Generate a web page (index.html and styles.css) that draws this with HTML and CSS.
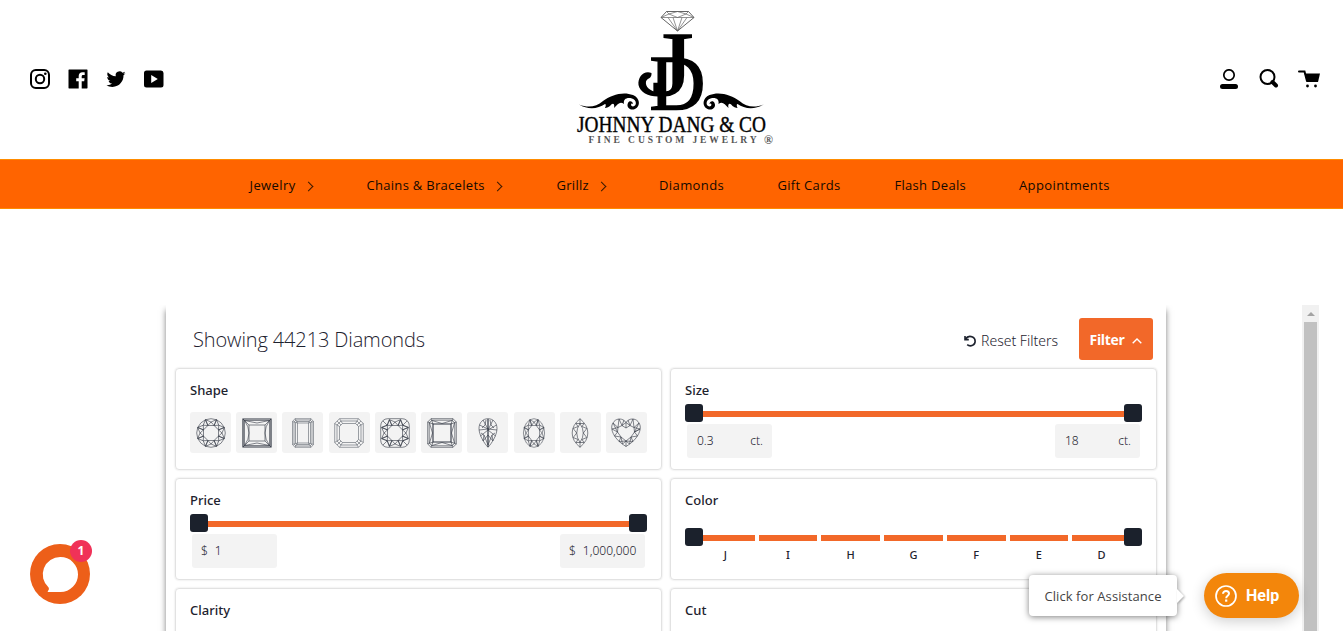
FILE: index.html
```html
<!DOCTYPE html>
<html lang="en">
<head>
<meta charset="utf-8">
<title>Johnny Dang &amp; Co</title>
<link rel="stylesheet" href="styles.css">
</head>
<body>
<svg class="defs" width="0" height="0" aria-hidden="true">
  <defs>
    <g id="facet"><path d="M-3.100-7.500H3.100L0-11zM-5.500-13.300 0-11 5.500-13.300M3.100-7.500 5.500-13.300M-3.100-7.500-5.500-13.300"/></g>
    <g id="facets">
      <use href="#facet"/><use href="#facet" transform="rotate(45)"/><use href="#facet" transform="rotate(90)"/><use href="#facet" transform="rotate(135)"/>
      <use href="#facet" transform="rotate(180)"/><use href="#facet" transform="rotate(225)"/><use href="#facet" transform="rotate(270)"/><use href="#facet" transform="rotate(315)"/>
    </g>
    <g id="flourish">
      <path d="M9 104.500C18 108 26 107 33 101C41 95 53 91 63 95C70 98 71 106 65 109C60 111 56 107 58 103C59 100 63 101 63 104C61 102 60 106 63 106.500C67 106 67 100 62 98.500C57 97 53 99 54 104C50 101 48 104 44 108C45 104 43 102 40 106C37 108 35 108 35 108C36 106 36 104 35 104C28 109 18 110 9 104.500Z"/>
    </g>
  </defs>
</svg>

<header class="header">
  <div class="social">
    <svg width="20" height="20" viewBox="0 0 20 20"><rect x="1" y="1" width="18" height="18" rx="4.800" fill="none" stroke="#000" stroke-width="2"/><circle cx="10" cy="10" r="4.200" fill="none" stroke="#000" stroke-width="2"/><circle cx="15.300" cy="4.700" r="1.300"/></svg>
    <svg width="20" height="20" viewBox="0 0 20 20"><path d="M1 .5H19A.6.6 0 0 1 19.500 1V19A.6.6 0 0 1 19 19.500H13.700V12.200H16.200L16.600 9.300H13.700V7.500C13.700 6.600 14 6 15.200 6H16.700V3.400C16.400 3.400 15.500 3.300 14.400 3.300 12.200 3.300 10.700 4.600 10.700 7.100V9.300H8.200V12.200H10.700V19.500H1A.6.6 0 0 1 .5 19V1A.6.6 0 0 1 1 .5Z"/></svg>
    <svg width="20" height="20" viewBox="0 0 20 20"><path d="M19.500 4.300C18.800 4.600 18.100 4.800 17.300 4.900 18.100 4.400 18.700 3.700 19 2.800 18.200 3.200 17.400 3.600 16.500 3.700A3.900 3.900 0 0 0 9.800 7.300C6.600 7.100 3.700 5.600 1.800 3.200.8 4.900 1.300 7.200 3 8.400 2.400 8.400 1.800 8.200 1.200 7.900 1.200 9.800 2.500 11.400 4.300 11.800 3.800 12 3.200 12 2.600 11.900 3.100 13.400 4.500 14.600 6.200 14.600A7.800 7.800 0 0 1 .5 16.200C2.200 17.300 4.200 17.900 6.400 17.900 13.600 17.900 17.800 11.800 17.500 6.300 18.300 5.700 19 5.100 19.500 4.300Z"/></svg>
    <svg width="20" height="20" viewBox="0 0 20 20"><path fill-rule="evenodd" d="M2.500 1.500H17A2.600 2.600 0 0 1 19.500 4V16A2.500 2.500 0 0 1 17 18.500H2.500A2.500 2.500 0 0 1 0 16V4A2.500 2.500 0 0 1 2.500 1.500ZM7.200 6V14L13.800 10Z"/></svg>
  </div>

  <svg class="logo" width="210" height="155" viewBox="0 0 210 155">
    <g fill="none" stroke="#666" stroke-width=".7"><path stroke="#222" d="M96.500 11.500H118.500L124 17.500 107.500 31 91 17.500Z"/><path d="M91 17.500H124M91 17.500 99 14 107.500 17.500 116 14 124 17.500M96.500 11.500 99 14 107.500 11.500 116 14 118.500 11.500M98 17.500 107.500 31 117 17.500M103 17.500 107.500 31 112 17.500"/></g>
    <g class="logo-serif">
      <text class="logo-mark" transform="translate(79.500 109) scale(.99 1)" font-size="78">D</text>
      <text class="logo-mark" transform="translate(82 94.500) scale(1.180 1)" font-size="90">J</text>
      <path d="M81.500 73C74 70 67.500 77 68.500 85C70 92 78 96.500 88 96.500V92.500C80 91 75 87 76 81.500C77 78 82 79 81.500 73Z"/>
      <text x="7" y="132" font-size="24" stroke="#111" stroke-width=".45" textLength="189" lengthAdjust="spacingAndGlyphs">JOHNNY DANG &amp; CO</text>
      <text class="logo-tag" x="18.500" y="143" font-size="9.500" textLength="168">FINE CUSTOM JEWELRY</text>
      <text class="logo-tag" x="194" y="144" font-size="12">®</text>
    </g>
    <use href="#flourish"/><use href="#flourish" transform="matrix(-1 0 0 1 202.500 0)"/>
  </svg>

  <div class="tools">
    <svg width="20" height="20" viewBox="0 0 20 20"><circle cx="10" cy="6" r="5.200" fill="none" stroke="#000" stroke-width="1.700"/><rect x="1" y="15" width="18" height="5" rx="2.500"/></svg>
    <svg width="20" height="20" viewBox="0 0 20 20"><circle cx="8.500" cy="8" r="7" fill="none" stroke="#000" stroke-width="2"/><path d="M13.500 13 17 16.500" stroke="#000" stroke-width="4" stroke-linecap="round"/></svg>
    <svg class="cart" width="24" height="20" viewBox="0 0 24 20"><path d="M1 2.500H6.500L9 12" fill="none" stroke="#000" stroke-width="2" stroke-linecap="round"/><path d="M6.500 4.500H22L20 13H9Z"/><circle cx="9.500" cy="17" r="1.400"/><circle cx="17.500" cy="17" r="1.400"/></svg>
  </div>
</header>

<nav class="nav">
  <a>Jewelry<i class="chev"></i></a>
  <a class="tight">Chains &amp; Bracelets<i class="chev"></i></a>
  <a class="tight">Grillz<i class="chev"></i></a>
  <a>Diamonds</a>
  <a class="tight">Gift Cards</a>
  <a class="tight">Flash Deals</a>
  <a>Appointments</a>
</nav>

<main class="frame">
  <section class="panel">
    <div class="panel-head">
      <h1>Showing 44213 Diamonds</h1>
      <div class="reset"><svg width="12" height="12" viewBox="0 0 12 12" fill="none" stroke="#1d222e" stroke-width="1.600"><path d="M1 1V4.600H4.800M1.300 4.300C3 1.700 6 .9 8.500 2 12 3.600 12 8.700 8.600 10.300 6.500 11.200 4.600 10.800 3.200 9.600"/></svg><span>Reset Filters</span></div>
      <button class="filter"><span>Filter</span><svg width="10" height="6" viewBox="0 0 10 6"><path d="M.7 5.300 5 1 9.300 5.300" fill="none" stroke="#fff" stroke-width="1.400"/></svg></button>
    </div>
    <div class="cards">
      <div class="card">
        <h2>Shape</h2>
        <div class="shapes">
          <span><svg viewBox="-15 -15 30 30"><circle r="14.300"/><use href="#facets"/></svg></span>
          <span><svg viewBox="-15 -15 30 30"><path stroke-width="1.200" d="M-14-14H14V14H-14Z"/><path d="M-12.500-12.500H12.500V12.500H-12.500ZM-14-14-8-8H8L14-14M-14 14-8 8H8L14 14M-8-8V8M8-8V8M-12.500-12.500Q-3.500 0-12.500 12.500M12.500-12.500Q3.500 0 12.500 12.500M-12.500-12.500 0-10 12.500-12.500M-12.500 12.500 0 10 12.500 12.500"/></svg></span>
          <span><svg class="soft" viewBox="-15 -15 30 30"><path d="M-8-14.300H8L10.500-11.500V11.500L8 14.300H-8L-10.500 11.500V-11.500ZM-7-13H7L9-11V11L7 13H-7L-9 11V-11ZM-6-11.500H6L7.500-10V10L6 11.500H-6L-7.500 10V-10ZM-5.500-10H5.500V10H-5.500ZM-8-14.300-5.500-10-10.500-11.500M8-14.300 5.500-10 10.500-11.500M-8 14.300-5.500 10-10.500 11.500M8 14.300 5.500 10 10.500 11.500"/></svg></span>
          <span><svg class="soft" viewBox="-15 -15 30 30"><path d="M-9.500-14.300H9.500L14.300-9.500V9.500L9.500 14.300H-9.500L-14.300 9.500V-9.500ZM-8-12H8L12-8V8L8 12H-8L-12 8V-8ZM-6.500-9.500H6.500L9.500-6.500V6.500L6.500 9.500H-6.500L-9.500 6.500V-6.500ZM-9.500-14.300-6.500-9.500M9.500-14.300 6.500-9.500M-9.500 14.300-6.500 9.500M9.500 14.300 6.500 9.500M-14.300-9.500-9.500-6.500M14.300-9.500 9.500-6.500M-14.300 9.500-9.500 6.500M14.300 9.500 9.500 6.500M-12-12-8-8M12-12 8-8M-12 12-8 8M12 12 8 8"/></svg></span>
          <span><svg viewBox="-15 -15 30 30"><rect x="-14.300" y="-14.300" width="28.600" height="28.600" rx="7"/><use href="#facets"/><path d="M-5.600-13.400-7.800-7.800-13.400-5.600M5.600-13.400 7.800-7.800 13.400-5.600M-5.600 13.400-7.800 7.800-13.400 5.600M5.600 13.400 7.800 7.800 13.400 5.600M-12.200-12.200-7.800-7.800M12.200-12.200 7.800-7.800M-12.200 12.200-7.800 7.800M12.200 12.200 7.800 7.800"/></svg></span>
          <span><svg viewBox="-15 -15 30 30"><path d="M-11-14.300H11L14.300-11V11L11 14.300H-11L-14.300 11V-11ZM-10-12.800H10L12.800-10V10L10 12.800H-10L-12.800 10V-10ZM-14.300-11-9-9-11-14.300M14.300-11 9-9 11-14.300M-14.300 11-9 9-11 14.300M14.300 11 9 9 11 14.300M-10-12.500 0-9.500 10-12.500M-10 12.500 0 9.500 10 12.500M-12.500-10-9.500 0-12.500 10M12.500-10 9.500 0 12.500 10"/><path stroke-width="1.100" d="M-9-9H9V9H-9Z"/></svg></span>
          <span><svg viewBox="-15 -15 30 30"><path d="M0-14.300C5-14.300 9-10.500 9-4.500 9 2 4 10 0 14.300-4 10-9 2-9-4.500-9-10.500-5-14.300 0-14.300ZM0-4-5-13M0-4-8.500-8M0-4-9-3M0-3-7.500 3M0-3 5-13M0-3 8.500-8M0-4 9-3M0-3 7.500 3M0 2-5 8M0 2 5 8M-6-5-3-8-2-13M6-5 3-8 2-13M-7 0-4 2-5 8M7 0 4 2 5 8M-4 2 0 12 4 2"/><path stroke-width="1.200" d="M0-14V14"/></svg></span>
          <span><svg viewBox="-15 -15 30 30"><g transform="scale(.74 1)"><circle r="14.300"/><use href="#facets"/></g></svg></span>
          <span><svg viewBox="-15 -15 30 30"><path d="M0-14.300Q8-7.500 7.800 0 8 7.500 0 14.300-8 7.500-7.800 0-8-7.500 0-14.300ZM0-9.500Q6.500 0 0 9.500-6.500 0 0-9.500M0-14.300V-9.500M0 14.300V9.500M0-9.500-4-9.500-2-6.500-6.800-4.500-3.300 0-6.800 4.500-2 6.500-4 9.500 0 9.500M0-9.500 4-9.500 2-6.500 6.800-4.500 3.300 0 6.800 4.500 2 6.500 4 9.500 0 9.500"/></svg></span>
          <span><svg viewBox="-15 -15 30 30"><path d="M0-10.500C3-15 9-15 12-11.500 16-7 14.500-1 10 5 7 9 3 11.500 0 13.500-3 11.500-7 9-10 5-14.500-1-16-7-12-11.500-9-15-3-15 0-10.500ZM0-5 4-7.500 8-5.500 8.500-1 5 4 0 8-5 4-8.500-1-8-5.500-4-7.500ZM0-10.500V-5M0-10.500 4-7.500 7-14 8-5.500 13-10 8.500-1 14-4 8.500-1 11.500 3 5 4 7 8.500 0 8V13.500M0-10.500-4-7.500-7-14-8-5.500-13-10-8.500-1-14-4M-8.500-1-11.500 3-5 4-7 8.500 0 8M5 4 3.500 11 0 8-3.500 11-5 4M4-7.500 2-13M-4-7.500-2-13M8-5.500 14-4M-8-5.500-14-4"/></svg></span>
        </div>
      </div>
      <div class="card">
        <h2>Size</h2>
        <div class="slider"><b></b><div class="track"></div><b></b></div>
        <div class="fields"><div class="field"><span>0.3</span><span>ct.</span></div><div class="field"><span>18</span><span>ct.</span></div></div>
      </div>
      <div class="card">
        <h2>Price</h2>
        <div class="slider"><b></b><div class="track"></div><b></b></div>
        <div class="fields"><div class="field money"><span>$</span><span>1</span></div><div class="field money"><span>$</span><span>1,000,000</span></div></div>
      </div>
      <div class="card">
        <h2>Color</h2>
        <div class="slider stepped"><b></b><div class="track"><i></i><i></i><i></i><i></i><i></i><i></i><i></i></div><b></b></div>
        <div class="grades"><span>J</span><span>I</span><span>H</span><span>G</span><span>F</span><span>E</span><span>D</span></div>
      </div>
      <div class="card"><h2>Clarity</h2></div>
      <div class="card"><h2>Cut</h2></div>
    </div>
  </section>
  <div class="scrollbar"><div class="arrow"></div><div class="thumb"></div></div>
</main>

<div class="chat">
  <svg width="60" height="60" viewBox="0 0 60 60"><circle cx="30" cy="30" r="30" fill="#ed5f19"/><path fill="#fff" d="M30.500 13A17.500 17.500 0 0 1 30.500 48H18.300C17.800 48 17.500 47.600 17.800 47.200 18.800 46 19.300 45 18.600 43.600A17.500 17.500 0 0 1 30.500 13Z"/></svg>
  <span class="badge">1</span>
</div>
<div class="tip">Click for Assistance</div>
<div class="help"><svg width="22" height="22" viewBox="0 0 22 22"><circle cx="11" cy="11" r="10" fill="none" stroke="#fff" stroke-width="1.700"/><path d="M8 8.700C8 5.200 14 5.300 14 8.600 14 10.800 11.200 10.800 11.200 13.200" fill="none" stroke="#fff" stroke-width="2"/><rect x="10.100" y="14.500" width="2.200" height="2.200" fill="#fff"/></svg><span>Help</span></div>
</body>
</html>
```
FILE: styles.css
```css
* { box-sizing: border-box; }
body { margin: 0; width: 1343px; height: 631px; overflow: hidden; background: #fff; color: #1d222e; font-family: "Open Sans", "Noto Sans", sans-serif; }
h1, h2 { margin: 0; }
.defs { display: block; }

.header { height: 159px; display: grid; grid-template-columns: 570px 210px 1fr; }
.social { display: flex; gap: 18px; padding: 69px 0 0 30px; }
.logo { display: block; overflow: visible; }
.logo-serif { font-family: "Liberation Serif", serif; fill: #000; }
.logo-mark { stroke: #000; stroke-width: 1.500px; }
.logo-tag { font-weight: 700; fill: #555; }
.tools { display: flex; justify-content: flex-end; gap: 20px; padding: 69px 21px 0 0; }
.cart { margin-left: -1px; }

.nav { height: 50px; background: #ff6400; border: solid #ff8c00; border-width: 1px 0; display: grid; grid-template-columns: 117px 190px 102.500px 118.500px 117px 124.500px auto; padding-left: 249.500px; font-size: 13px; line-height: 50px; letter-spacing: .4px; color: #130900; white-space: nowrap; }
.nav .tight { letter-spacing: .3px; }
.chev { display: inline-block; width: 7px; height: 7px; margin-left: 9px; border: solid #3a1a00; border-width: 1px 1px 0 0; transform: rotate(45deg); }

.frame { margin-top: 96px; height: 326px; width: 1319px; overflow: hidden; display: flex; justify-content: space-between; }
.panel { margin-left: 166px; width: 1000px; height: 500px; padding: 13px 9px 0; background: #fff; box-shadow: 0 5px 6px rgba(0,0,0,.5); font-family: "Noto Sans", "Open Sans", sans-serif; }
.panel-head { height: 42px; display: flex; align-items: center; padding: 0 4px 0 18px; }
h1 { font-family: "Open Sans", sans-serif; font-weight: 300; font-size: 20px; margin-right: auto; letter-spacing: -.13px; }
.reset { display: flex; align-items: center; gap: 5px; font-size: 14px; margin-right: 21px; padding-top: 3px; font-weight: 300; }
.filter { width: 74px; height: 42px; border: 0; border-radius: 3px; padding: 0; background: #f26829; color: #fff; font: 700 14px "Open Sans", sans-serif; letter-spacing: -.35px; display: flex; align-items: center; justify-content: center; gap: 8px; }
.filter svg { margin-top: 3px; }
.cards { display: grid; grid-template-columns: 487px 487px; grid-auto-rows: 102px; gap: 8px; margin-top: 8px; }
.card { border: 1px solid #e2e2e2; border-radius: 4px; box-shadow: 0 0 2px rgba(0,0,0,.15); padding: 11px 14px 0; }
.card h2 { font-size: 13px; line-height: 20px; font-weight: 500; }
.shapes { display: flex; justify-content: space-between; margin-top: 12px; }
.shapes span { width: 41px; height: 41px; border-radius: 3px; background: #f3f3f3; display: grid; place-items: center; }
.shapes svg { width: 30px; height: 30px; fill: none; stroke: #303642; stroke-width: .6; }
.shapes svg.soft { stroke: #5d636c; }
.slider { height: 18px; margin-top: 4px; display: flex; align-items: center; }
.slider b { width: 18px; height: 18px; border-radius: 3px; background: #1b212c; }
.track { flex: 1; height: 6px; margin-top: 2px; background: #f26829; }
.fields { display: flex; justify-content: space-between; padding: 2px 2px 0; }
.field { width: 85px; height: 34px; border-radius: 3px; background: #f3f3f3; display: flex; justify-content: space-between; padding: 0 9px 0 10px; font-size: 12px; line-height: 33px; font-weight: 300; }
.money { justify-content: flex-start; gap: 7px; padding-left: 9px; }
.stepped { margin-top: 18px; }
.stepped .track { background: none; display: grid; grid-template-columns: 52px 58px 59px 59px 59px 58px 1fr; column-gap: 4px; }
.stepped i { background: #f26829; }
.grades { display: grid; grid-template-columns: repeat(7, 62.700px); margin: 1px 0 0 9px; font-size: 11px; line-height: 16px; text-align: center; font-weight: 500; }
.scrollbar { width: 17px; background: #f1f1f1; }
.arrow { height: 17px; display: grid; place-items: center; }
.arrow::before { content: ""; border: solid transparent; border-width: 0 4px 4px; border-bottom-color: #a3a3a3; }
.thumb { height: 320px; margin: 0 2px; background: #c1c1c1; }

.chat { position: absolute; left: 30px; top: 544px; width: 60px; height: 60px; }
.badge { position: absolute; left: 40px; top: -4px; width: 22px; height: 22px; border-radius: 50%; background: #f03258; color: #fff; font: 700 12px/22px "Open Sans", sans-serif; text-align: center; }
.tip { position: absolute; left: 1029px; top: 575px; width: 148px; height: 41px; border-radius: 4px; background: #fff; box-shadow: 0 1px 6px rgba(0,0,0,.5); text-align: center; font-size: 13px; line-height: 42px; letter-spacing: .08px; color: #444; white-space: nowrap; }
.tip::after { content: ""; position: absolute; left: 148px; top: 14px; border: solid transparent; border-width: 7px 0 7px 7px; border-left-color: #fff; filter: drop-shadow(1px 1px 1px rgba(0,0,0,.3)); }
.help { position: absolute; left: 1204px; top: 573px; width: 95px; height: 45px; border-radius: 23px; background: #f3860b; box-shadow: 0 3px 14px rgba(0,0,0,.2); color: #fff; font: 700 16px Roboto, sans-serif; display: flex; align-items: center; padding-left: 11px; gap: 9px; }
```
